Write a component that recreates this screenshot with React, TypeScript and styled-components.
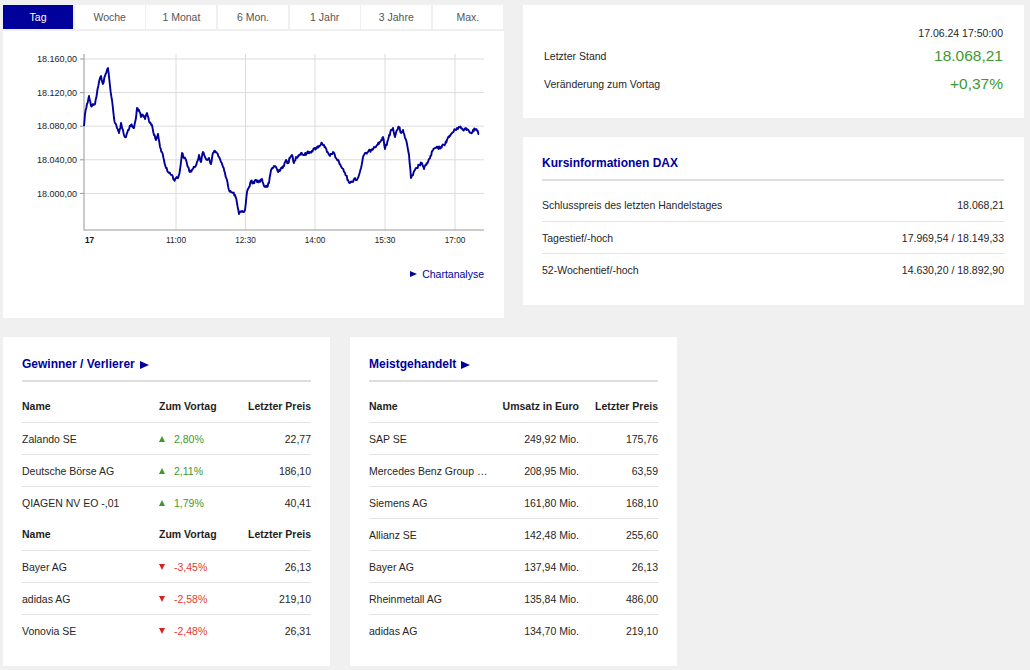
import React from "react";
import styled, { createGlobalStyle } from "styled-components";

const BLUE = "#00009a";
const GREEN = "#3a9a31";
const RED = "#e5382d";
const TEXT = "#262626";

const GlobalStyle = createGlobalStyle`
  html, body { margin: 0; padding: 0; }
  body {
    background: #f0f0f0;
    font-family: "Liberation Sans", Arial, Helvetica, sans-serif;
    color: ${TEXT};
  }
`;

const Page = styled.div`
  width: 1030px;
  height: 670px;
  box-sizing: border-box;
  padding: 5px 6px 0 3px;
  display: flex;
  flex-direction: column;
  gap: 19px;
  overflow: hidden;
`;

const TopRow = styled.div`
  display: flex;
  gap: 19px;
  align-items: flex-start;
`;

const ChartCard = styled.section`
  width: 501px;
  display: flex;
  flex-direction: column;
  gap: 2px;
`;

const Tabs = styled.div`
  display: grid;
  grid-template-columns: repeat(7, 1fr);
  gap: 1.5px;
  width: 500px;
  height: 24px;
`;

const Tab = styled.div<{ $active?: boolean }>`
  display: flex;
  align-items: center;
  justify-content: center;
  background: ${(p) => (p.$active ? BLUE : "#fff")};
  color: ${(p) => (p.$active ? "#fff" : "#555")};
  font-size: 10.5px;
`;

const ChartBody = styled.div`
  background: #fff;
  height: 287px;
  display: flex;
  flex-direction: column;
`;

const ChartSvg = styled.svg`
  display: block;
  width: 501px;
  height: 235px;
`;

const LinkRow = styled.div`
  height: 16px;
  display: flex;
  align-items: center;
  justify-content: flex-end;
  gap: 5px;
  padding-right: 20px;
  color: ${BLUE};
  font-size: 10.5px;
`;

const RightTriangle = styled.span<{ $size: number }>`
  display: inline-block;
  width: 0;
  height: 0;
  border-top: ${(p) => p.$size / 2}px solid transparent;
  border-bottom: ${(p) => p.$size / 2}px solid transparent;
  border-left: ${(p) => p.$size}px solid ${BLUE};
`;

const RightColumn = styled.div`
  width: 501px;
  display: flex;
  flex-direction: column;
  gap: 19px;
`;

const QuoteCard = styled.section`
  background: #fff;
  padding: 19px 21px 20px;
`;

const DateRow = styled.div`
  height: 18px;
  display: flex;
  align-items: center;
  justify-content: flex-end;
  font-size: 10.5px;
  color: ${TEXT};
`;

const QuoteRow = styled.div`
  height: 28px;
  display: flex;
  align-items: center;
  justify-content: space-between;
  font-size: 10.5px;
  color: ${TEXT};
`;

const BigValue = styled.span`
  font-size: 15.5px;
  color: ${GREEN};
`;

const Card = styled.section<{ $width?: number }>`
  background: #fff;
  width: ${(p) => (p.$width ? `${p.$width}px` : "auto")};
  box-sizing: border-box;
  padding: 20px 19px 20px;
`;

const InfoCard = styled(Card)`
  padding: 19px 20px 20px 19px;
`;

const CardTitle = styled.h2`
  margin: 0 0 8px;
  height: 15px;
  padding-bottom: 8px;
  border-bottom: 2px solid #dedede;
  display: flex;
  align-items: center;
  gap: 5px;
  font-size: 12px;
  font-weight: bold;
  line-height: 15px;
  color: ${BLUE};
`;

const InfoRow = styled.div`
  height: 32px;
  box-sizing: border-box;
  display: flex;
  align-items: center;
  justify-content: space-between;
  font-size: 10.5px;
  color: ${TEXT};
  & + & { border-top: 1px solid #e3e3e3; }
`;

const BottomRow = styled.div`
  display: flex;
  gap: 20px;
  align-items: flex-start;
`;

const TableRow = styled.div<{ $cols: string; $head?: boolean; $sep?: boolean }>`
  display: grid;
  grid-template-columns: ${(p) => p.$cols};
  align-items: center;
  height: 32px;
  box-sizing: border-box;
  border-top: ${(p) => (p.$sep ? "1px solid #e3e3e3" : "none")};
  font-size: 10.5px;
  font-weight: ${(p) => (p.$head ? "bold" : "normal")};
  color: ${(p) => (p.$head ? "#1e1e1e" : TEXT)};
`;

const Cell = styled.div<{ $right?: boolean }>`
  text-align: ${(p) => (p.$right ? "right" : "left")};
  white-space: nowrap;
`;

const ChangeCell = styled.div<{ $up: boolean }>`
  display: flex;
  align-items: center;
  gap: 9px;
  color: ${(p) => (p.$up ? GREEN : RED)};
`;

const Arrow = styled.span<{ $up: boolean }>`
  display: inline-block;
  width: 0;
  height: 0;
  border-left: 3.5px solid transparent;
  border-right: 3.5px solid transparent;
  ${(p) =>
    p.$up
      ? `border-bottom: 6px solid ${GREEN};`
      : `border-top: 6px solid #d8261c;`}
`;

/* ---------- chart data ---------- */
const WAYPOINTS: [number, number][] = [
  [84, 126], [85, 114], [87, 104], [89, 96], [91, 106], [93, 104], [95, 104], [97, 93], [99, 82],
  [101, 76], [103, 84], [105, 76], [107, 70], [108, 68], [110, 86], [112, 100], [114, 118], [115, 123],
  [117, 128], [119, 133], [121, 123], [124, 135], [126, 137], [128, 130], [131, 125], [134, 128],
  [136, 118], [137, 108], [139, 110], [141, 117], [143, 115], [145, 119], [147, 113], [149, 121],
  [152, 125], [154, 135], [156, 140], [158, 134], [160, 147], [162, 152], [164, 160], [166, 168],
  [168, 172], [170, 173], [172, 175], [174, 180], [176, 178], [178, 178], [180, 170], [182, 153],
  [184, 158], [186, 160], [188, 167], [190, 172], [192, 170], [195, 167], [197, 162], [199, 155],
  [201, 162], [203, 152], [205, 157], [207, 160], [209, 158], [211, 164], [213, 153], [215, 151],
  [217, 153], [219, 157], [221, 162], [223, 167], [225, 173], [227, 180], [229, 190], [231, 192],
  [233, 193], [235, 195], [237, 203], [239, 214], [241, 212], [243, 212], [245, 210], [247, 192],
  [249, 187], [251, 181], [253, 183], [256, 180], [259, 182], [262, 179], [264, 186], [267, 187],
  [269, 183], [271, 170], [274, 166], [276, 167], [278, 172], [281, 168], [284, 166], [286, 160],
  [288, 163], [290, 158], [292, 155], [294, 163], [296, 157], [298, 156], [301, 153], [304, 155],
  [307, 153], [310, 152], [313, 150], [316, 148], [319, 146], [322, 143], [324, 145], [327, 152],
  [330, 156], [333, 152], [336, 158], [339, 162], [342, 168], [345, 173], [348, 180], [350, 183],
  [352, 182], [355, 178], [357, 180], [359, 175], [361, 168], [363, 157], [366, 153], [368, 152],
  [371, 150], [374, 147], [377, 145], [380, 142], [383, 137], [385, 149], [388, 140], [391, 130],
  [393, 128], [395, 137], [397, 130], [399, 127], [401, 133], [403, 130], [405, 138], [407, 144],
  [409, 155], [411, 178], [413, 175], [415, 170], [417, 168], [419, 165], [422, 163], [424, 169],
  [427, 163], [430, 158], [433, 150], [435, 148], [438, 148], [441, 147], [444, 145], [447, 140],
  [449, 137], [452, 133], [455, 130], [457, 128], [460, 127], [463, 130], [466, 128], [469, 131],
  [471, 133], [473, 130], [476, 129], [479, 134],
];

function buildPath(): string {
  let seed = 12345;
  const rand = () => {
    seed = (seed * 1103515245 + 12345) % 2147483648;
    return seed / 2147483648;
  };
  const pts: string[] = [];
  for (let i = 0; i < WAYPOINTS.length - 1; i++) {
    const [x0, y0] = WAYPOINTS[i];
    const [x1, y1] = WAYPOINTS[i + 1];
    const steps = Math.max(1, Math.round((x1 - x0) * 1.5));
    for (let s = 0; s < steps; s++) {
      const t = s / steps;
      const x = x0 + (x1 - x0) * t;
      let y = y0 + (y1 - y0) * t;
      if (s > 0) y += (rand() - 0.5) * 3;
      pts.push(`${x.toFixed(2)},${y.toFixed(2)}`);
    }
  }
  const last = WAYPOINTS[WAYPOINTS.length - 1];
  pts.push(`${last[0]},${last[1]}`);
  return "M" + pts.join(" L");
}

const LINE_PATH = buildPath();

const Y_LABELS: [string, number][] = [
  ["18.160,00", 59],
  ["18.120,00", 92.6],
  ["18.080,00", 126.2],
  ["18.040,00", 159.8],
  ["18.000,00", 193.4],
];

const X_LABELS: [string, number][] = [
  ["11:00", 176],
  ["12:30", 245.5],
  ["14:00", 315],
  ["15:30", 385],
  ["17:00", 455],
];

const FONT = "Liberation Sans, Arial, sans-serif";

const PriceChart = () => (
  <ChartSvg viewBox="0 0 501 235">
    <g transform="translate(-3,-31)">
      {Y_LABELS.map(([l, y]) => (
        <g key={l}>
          <line x1={84} x2={484} y1={y} y2={y} stroke="#dcdcdc" strokeWidth={1} />
          <line x1={80} x2={84} y1={y} y2={y} stroke="#999" strokeWidth={1} />
          <text x={77} y={y + 3.2} textAnchor="end" fontSize={9} fill="#222" fontFamily={FONT}>{l}</text>
        </g>
      ))}
      {X_LABELS.map(([l, x]) => (
        <g key={l}>
          <line x1={x} x2={x} y1={54} y2={230} stroke="#dcdcdc" strokeWidth={1} />
          <text x={x} y={243} textAnchor="middle" fontSize={8.25} fill="#222" fontFamily={FONT}>{l}</text>
        </g>
      ))}
      <text x={89.5} y={243} textAnchor="middle" fontSize={8.25} fontWeight="bold" fill="#111" fontFamily={FONT}>17</text>
      <line x1={84} x2={84} y1={54} y2={230.5} stroke="#999" strokeWidth={1} />
      <line x1={84} x2={484} y1={230} y2={230} stroke="#999" strokeWidth={1} />
      <path d={LINE_PATH} fill="none" stroke={BLUE} strokeWidth={1.9} strokeLinejoin="round" />
    </g>
  </ChartSvg>
);

const TABS = ["Tag", "Woche", "1 Monat", "6 Mon.", "1 Jahr", "3 Jahre", "Max."];

const GV_COLS = "137px 1fr auto";
const MG_COLS = "120px 90px 79px";

const winners = [
  { name: "Zalando SE", change: "2,80%", price: "22,77" },
  { name: "Deutsche Börse AG", change: "2,11%", price: "186,10" },
  { name: "QIAGEN NV EO -,01", change: "1,79%", price: "40,41" },
];
const losers = [
  { name: "Bayer AG", change: "-3,45%", price: "26,13" },
  { name: "adidas AG", change: "-2,58%", price: "219,10" },
  { name: "Vonovia SE", change: "-2,48%", price: "26,31" },
];

const mostTraded = [
  { name: "SAP SE", volume: "249,92 Mio.", price: "175,76" },
  { name: "Mercedes Benz Group …", volume: "208,95 Mio.", price: "63,59" },
  { name: "Siemens AG", volume: "161,80 Mio.", price: "168,10" },
  { name: "Allianz SE", volume: "142,48 Mio.", price: "255,60" },
  { name: "Bayer AG", volume: "137,94 Mio.", price: "26,13" },
  { name: "Rheinmetall AG", volume: "135,84 Mio.", price: "486,00" },
  { name: "adidas AG", volume: "134,70 Mio.", price: "219,10" },
];

const GvHead = () => (
  <TableRow $cols={GV_COLS} $head>
    <Cell>Name</Cell>
    <Cell>Zum Vortag</Cell>
    <Cell $right>Letzter Preis</Cell>
  </TableRow>
);

export default function App() {
  return (
    <>
      <GlobalStyle />
      <Page>
        <TopRow>
          <ChartCard>
            <Tabs>
              {TABS.map((t, i) => (
                <Tab key={t} $active={i === 0}>{t}</Tab>
              ))}
            </Tabs>
            <ChartBody>
              <PriceChart />
              <LinkRow>
                <RightTriangle $size={7} />
                <span>Chartanalyse</span>
              </LinkRow>
            </ChartBody>
          </ChartCard>

          <RightColumn>
            <QuoteCard>
              <DateRow>17.06.24 17:50:00</DateRow>
              <QuoteRow>
                <span>Letzter Stand</span>
                <BigValue>18.068,21</BigValue>
              </QuoteRow>
              <QuoteRow>
                <span>Veränderung zum Vortag</span>
                <BigValue>+0,37%</BigValue>
              </QuoteRow>
            </QuoteCard>

            <InfoCard>
              <CardTitle>Kursinformationen DAX</CardTitle>
              <InfoRow>
                <span>Schlusspreis des letzten Handelstages</span>
                <span>18.068,21</span>
              </InfoRow>
              <InfoRow>
                <span>Tagestief/-hoch</span>
                <span>17.969,54 / 18.149,33</span>
              </InfoRow>
              <InfoRow>
                <span>52-Wochentief/-hoch</span>
                <span>14.630,20 / 18.892,90</span>
              </InfoRow>
            </InfoCard>
          </RightColumn>
        </TopRow>

        <BottomRow>
          <Card $width={327}>
            <CardTitle>
              Gewinner / Verlierer <RightTriangle $size={9} />
            </CardTitle>
            <GvHead />
            {winners.map((r) => (
              <TableRow key={r.name} $cols={GV_COLS} $sep>
                <Cell>{r.name}</Cell>
                <ChangeCell $up>
                  <Arrow $up />
                  {r.change}
                </ChangeCell>
                <Cell $right>{r.price}</Cell>
              </TableRow>
            ))}
            <GvHead />
            {losers.map((r) => (
              <TableRow key={r.name} $cols={GV_COLS} $sep>
                <Cell>{r.name}</Cell>
                <ChangeCell $up={false}>
                  <Arrow $up={false} />
                  {r.change}
                </ChangeCell>
                <Cell $right>{r.price}</Cell>
              </TableRow>
            ))}
          </Card>

          <Card $width={327}>
            <CardTitle>
              Meistgehandelt <RightTriangle $size={9} />
            </CardTitle>
            <TableRow $cols={MG_COLS} $head>
              <Cell>Name</Cell>
              <Cell $right>Umsatz in Euro</Cell>
              <Cell $right>Letzter Preis</Cell>
            </TableRow>
            {mostTraded.map((r) => (
              <TableRow key={r.volume} $cols={MG_COLS} $sep>
                <Cell>{r.name}</Cell>
                <Cell $right>{r.volume}</Cell>
                <Cell $right>{r.price}</Cell>
              </TableRow>
            ))}
          </Card>
        </BottomRow>
      </Page>
    </>
  );
}
